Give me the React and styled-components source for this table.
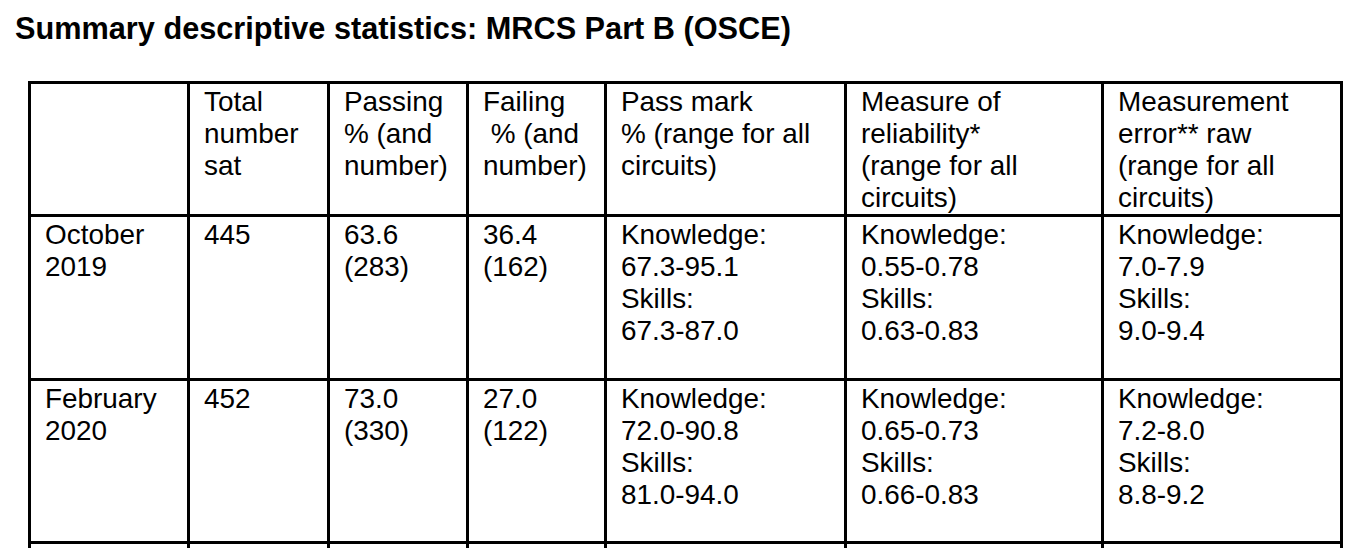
import React from "react";
import styled, { createGlobalStyle } from "styled-components";

const GlobalStyle = createGlobalStyle`
  html, body {
    margin: 0;
    padding: 0;
    background: #ffffff;
    overflow: hidden;
  }
  body {
    font-family: "Liberation Sans", Arial, sans-serif;
    color: #000000;
  }
`;

const Page = styled.div`
  padding: 11px 0 0 15px;
`;

const Title = styled.h1`
  margin: 0;
  font-size: 30.7px;
  line-height: 36px;
  font-weight: 700;
  color: #000;
`;

const Table = styled.table`
  margin: 34px 0 0 13px;
  width: 1315px;
  table-layout: fixed;
  border-collapse: separate;
  border-spacing: 3px;
  background: #000;
`;

const Col = styled.col`
  width: ${(p) => p.$w}px;
`;

const Cell = styled.td`
  box-sizing: border-box;
  background: #fff;
  vertical-align: top;
  text-align: left;
  font-weight: 400;
  padding: 2px 0 0 14px;
  height: ${(p) => p.$h}px;
  font-size: 27.9px;
  line-height: 32px;
  white-space: pre;
  overflow: hidden;
`;

const widths = [156, 137, 136, 135, 237, 254, 236];

const header = [
  "",
  "Total\nnumber\nsat",
  "Passing\n% (and\nnumber)",
  "Failing\n % (and\nnumber)",
  "Pass mark\n% (range for all\ncircuits)",
  "Measure of\nreliability*\n(range for all\ncircuits)",
  "Measurement\nerror** raw\n(range for all\ncircuits)",
];

const rows = [
  {
    h: 161,
    cells: [
      "October\n2019",
      "445",
      "63.6\n(283)",
      "36.4\n(162)",
      "Knowledge:\n67.3-95.1\nSkills:\n67.3-87.0",
      "Knowledge:\n0.55-0.78\nSkills:\n0.63-0.83",
      "Knowledge:\n7.0-7.9\nSkills:\n9.0-9.4",
    ],
  },
  {
    h: 160,
    cells: [
      "February\n2020",
      "452",
      "73.0\n(330)",
      "27.0\n(122)",
      "Knowledge:\n72.0-90.8\nSkills:\n81.0-94.0",
      "Knowledge:\n0.65-0.73\nSkills:\n0.66-0.83",
      "Knowledge:\n7.2-8.0\nSkills:\n8.8-9.2",
    ],
  },
  {
    h: 160,
    cells: ["", "", "", "", "", "", ""],
  },
];

export default function App() {
  return (
    <>
      <GlobalStyle />
      <Page>
        <Title>Summary descriptive statistics: MRCS Part B (OSCE)</Title>
        <Table>
          <colgroup>
            {widths.map((w, i) => (
              <Col key={i} $w={w} />
            ))}
          </colgroup>
          <thead>
            <tr>
              {header.map((t, i) => (
                <Cell as="th" key={i} $h={129}>
                  {t}
                </Cell>
              ))}
            </tr>
          </thead>
          <tbody>
            {rows.map((r, ri) => (
              <tr key={ri}>
                {r.cells.map((t, ci) => (
                  <Cell key={ci} $h={r.h}>
                    {t}
                  </Cell>
                ))}
              </tr>
            ))}
          </tbody>
        </Table>
      </Page>
    </>
  );
}
